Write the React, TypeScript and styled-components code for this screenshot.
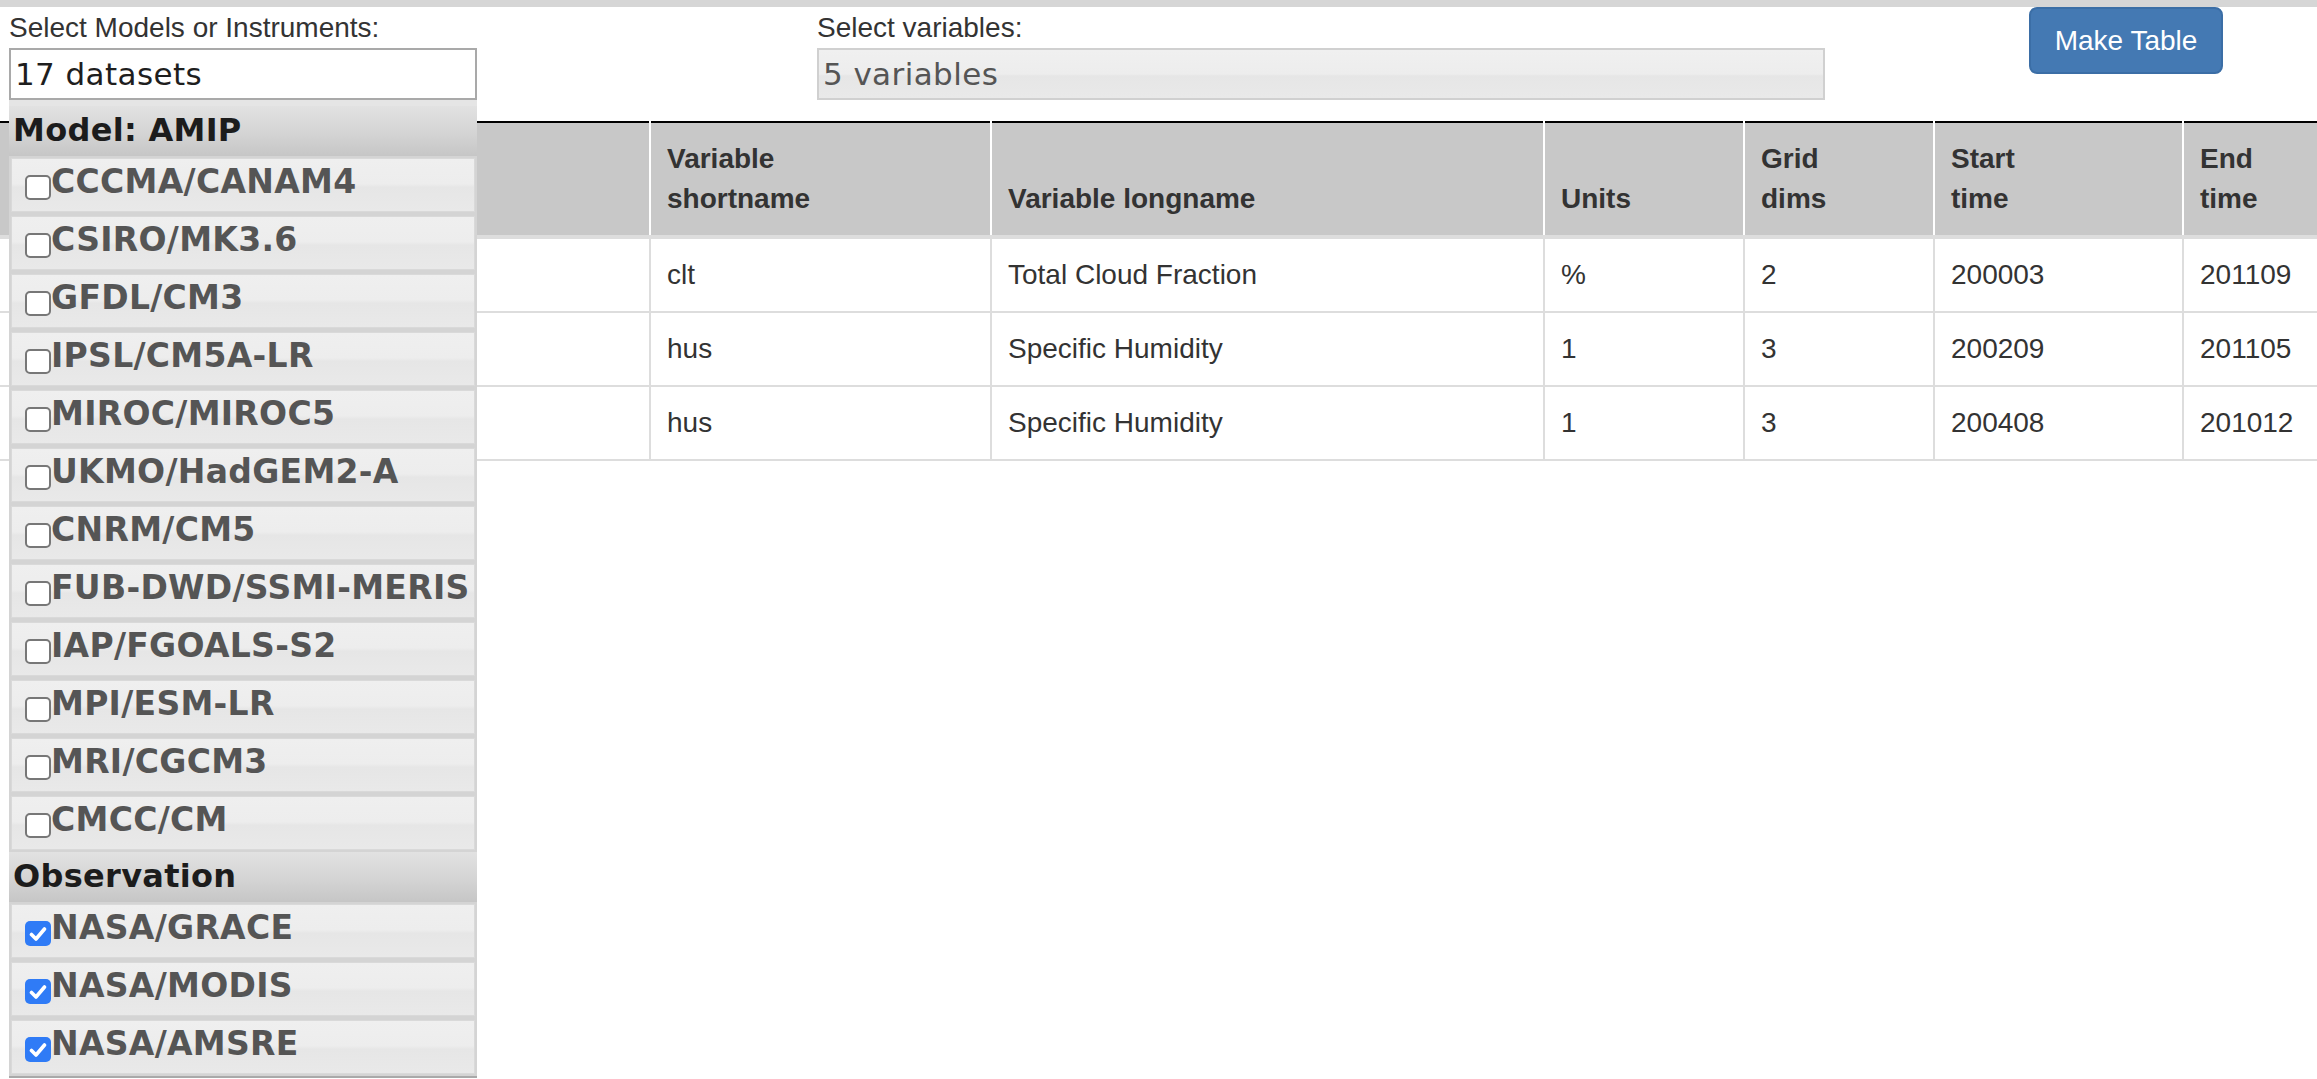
import React from "react";
import styled, { createGlobalStyle } from "styled-components";

const GlobalStyle = createGlobalStyle`
  html, body {
    margin: 0;
    padding: 0;
    background: #ffffff;
    overflow: hidden;
  }
  body {
    font-family: "Liberation Sans", Arial, Helvetica, sans-serif;
    color: #333333;
  }
`;

const Page = styled.div`
  width: 2317px;
  height: 1079px;
  overflow: hidden;
  position: relative;
`;

const TopBand = styled.div`
  height: 7px;
  background: #d6d6d6;
`;

const Controls = styled.div`
  display: flex;
  align-items: flex-start;
  padding-left: 9px;
  height: 114px;
  position: relative;
  z-index: 2;
`;

const Field = styled.div<{ $width: number; $offset: number }>`
  position: relative;
  flex: none;
  width: ${(p) => p.$width}px;
  margin-left: ${(p) => p.$offset}px;
`;

const Label = styled.div`
  font-size: 28px;
  line-height: 40px;
  color: #333333;
  margin-top: 1px;
  white-space: nowrap;
`;

const SelectBox = styled.div<{ $muted?: boolean }>`
  height: 52px;
  box-sizing: border-box;
  display: flex;
  align-items: center;
  padding-left: 4px;
  border: 2px solid ${(p) => (p.$muted ? "#d0d0d0" : "#a9a9a9")};
  background: ${(p) =>
    p.$muted
      ? "linear-gradient(to bottom, #f0f0f0 0%, #ededed 50%, #e6e6e6 54%, #e9e9e9 100%)"
      : "#ffffff"};
  font-family: "DejaVu Sans", Verdana, sans-serif;
  font-size: 31px;
  letter-spacing: 0.4px;
  color: ${(p) => (p.$muted ? "#555555" : "#1e1e1e")};
  white-space: nowrap;
`;

const Menu = styled.div`
  position: absolute;
  top: 100%;
  left: 0;
  width: 100%;
  box-sizing: border-box;
  display: flex;
  flex-direction: column;
  background: #d4d4d4;
  border-top: 6px solid #e5e5e5;
  border-bottom: 2px solid #a9a9a9;
  font-family: "DejaVu Sans", Verdana, sans-serif;
  font-weight: bold;
`;

const GroupHeader = styled.div`
  flex: none;
  height: 50px;
  box-sizing: border-box;
  padding: 6px 0 0 4px;
  font-size: 32px;
  line-height: 37px;
  letter-spacing: 0.3px;
  color: #1c1c1c;
  background: linear-gradient(to bottom, #e2e2e2 0%, #d4d4d4 55%, #c6c6c6 100%);
  white-space: nowrap;
`;

const Item = styled.div`
  flex: none;
  height: 54px;
  box-sizing: border-box;
  margin: 2px 2px;
  padding: 4px 0 0 13px;
  display: flex;
  align-items: flex-start;
  border: 1px solid #d9d9d9;
  background: linear-gradient(
    to bottom,
    #efefef 0%,
    #ededed 48%,
    #e6e6e6 54%,
    #e9e9e9 100%
  );
  color: #555555;
  font-size: 33px;
  line-height: 37px;
  letter-spacing: 0.3px;
  white-space: nowrap;
  overflow: hidden;
`;

const CheckBox = styled.span<{ $checked: boolean }>`
  flex: none;
  width: 26px;
  height: 25px;
  margin-top: 12px;
  box-sizing: border-box;
  border-radius: 5px;
  display: flex;
  align-items: center;
  justify-content: center;
  background: ${(p) => (p.$checked ? "#2f7bf6" : "#ffffff")};
  border: ${(p) => (p.$checked ? "none" : "2px solid #777777")};
`;

const Button = styled.button`
  flex: none;
  width: 194px;
  height: 67px;
  margin-left: 204px;
  box-sizing: border-box;
  border: 2px solid #3b6ea6;
  border-radius: 8px;
  background: #4479b3;
  color: #ffffff;
  font-family: "Liberation Sans", Arial, Helvetica, sans-serif;
  font-size: 28px;
  line-height: 40px;
  padding: 0;
  cursor: pointer;
`;

const TableWrap = styled.div`
  position: relative;
  z-index: 1;
  width: 2317px;
  overflow: hidden;
`;

const Table = styled.table`
  width: 2400px;
  table-layout: fixed;
  border-collapse: collapse;
  border-spacing: 0;
  border-top: 2px solid #000000;
  font-size: 28px;
  line-height: 40px;
  color: #333333;
`;

const Th = styled.th`
  background: #c8c8c8;
  font-weight: bold;
  text-align: left;
  vertical-align: bottom;
  padding: 16px;
  border-left: 2px solid #ffffff;
  border-bottom: 4px solid #dddddd;
  &:first-child {
    border-left: none;
  }
`;

const Td = styled.td`
  padding: 16px;
  text-align: left;
  vertical-align: top;
  border-top: 2px solid #dddddd;
  border-bottom: 2px solid #dddddd;
  border-left: 2px solid #dddddd;
  white-space: nowrap;
  &:first-child {
    border-left: none;
  }
`;

const Check = () => (
  <svg width="18" height="16" viewBox="0 0 18 16">
    <polyline
      points="2.5,8.5 7,13 15.5,3"
      fill="none"
      stroke="#ffffff"
      strokeWidth="3.6"
      strokeLinecap="round"
      strokeLinejoin="round"
    />
  </svg>
);

type Group = { title: string; items: { name: string; checked: boolean }[] };

const groups: Group[] = [
  {
    title: "Model: AMIP",
    items: [
      "CCCMA/CANAM4",
      "CSIRO/MK3.6",
      "GFDL/CM3",
      "IPSL/CM5A-LR",
      "MIROC/MIROC5",
      "UKMO/HadGEM2-A",
      "CNRM/CM5",
      "FUB-DWD/SSMI-MERIS",
      "IAP/FGOALS-S2",
      "MPI/ESM-LR",
      "MRI/CGCM3",
      "CMCC/CM",
    ].map((name) => ({ name, checked: false })),
  },
  {
    title: "Observation",
    items: ["NASA/GRACE", "NASA/MODIS", "NASA/AMSRE"].map((name) => ({
      name,
      checked: true,
    })),
  },
];

const columns: { width: number; lines: string[] }[] = [
  { width: 650, lines: [""] },
  { width: 341, lines: ["Variable", "shortname"] },
  { width: 553, lines: ["Variable longname"] },
  { width: 200, lines: ["Units"] },
  { width: 190, lines: ["Grid", "dims"] },
  { width: 249, lines: ["Start", "time"] },
  { width: 217, lines: ["End", "time"] },
];

const rows: string[][] = [
  ["", "clt", "Total Cloud Fraction", "%", "2", "200003", "201109"],
  ["", "hus", "Specific Humidity", "1", "3", "200209", "201105"],
  ["", "hus", "Specific Humidity", "1", "3", "200408", "201012"],
];

export default function App() {
  return (
    <Page>
      <GlobalStyle />
      <TopBand />
      <Controls>
        <Field $width={468} $offset={0}>
          <Label>Select Models or Instruments:</Label>
          <SelectBox>17 datasets</SelectBox>
          <Menu>
            {groups.map((g) => (
              <React.Fragment key={g.title}>
                <GroupHeader>{g.title}</GroupHeader>
                {g.items.map((it) => (
                  <Item key={it.name}>
                    <CheckBox $checked={it.checked}>
                      {it.checked && <Check />}
                    </CheckBox>
                    {it.name}
                  </Item>
                ))}
              </React.Fragment>
            ))}
          </Menu>
        </Field>
        <Field $width={1008} $offset={340}>
          <Label>Select variables:</Label>
          <SelectBox $muted>5 variables</SelectBox>
        </Field>
        <Button>Make Table</Button>
      </Controls>
      <TableWrap>
        <Table>
          <colgroup>
            {columns.map((c, i) => (
              <col key={i} style={{ width: c.width }} />
            ))}
          </colgroup>
          <thead>
            <tr>
              {columns.map((c, i) => (
                <Th key={i}>
                  {c.lines.map((l, j) => (
                    <React.Fragment key={j}>
                      {j > 0 && <br />}
                      {l}
                    </React.Fragment>
                  ))}
                </Th>
              ))}
            </tr>
          </thead>
          <tbody>
            {rows.map((r, i) => (
              <tr key={i}>
                {r.map((v, j) => (
                  <Td key={j}>{v}</Td>
                ))}
              </tr>
            ))}
          </tbody>
        </Table>
      </TableWrap>
    </Page>
  );
}
